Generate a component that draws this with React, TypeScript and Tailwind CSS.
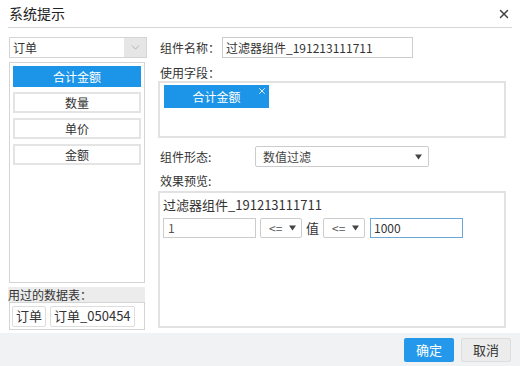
import { X, ChevronDown } from 'lucide-react'

const fields = ['合计金额', '数量', '单价', '金额']

function Caret() {
  return (
    <svg width="7" height="6" viewBox="0 0 7 6" className="shrink-0">
      <path d="M0 0.5h7L3.5 5.5z" fill="#444" />
    </svg>
  )
}

export default function App() {
  return (
    <div
      className="w-[520px] h-[366px] bg-white flex flex-col text-[12px] text-[#333] overflow-hidden"
      style={{ fontFamily: '"Noto Sans CJK SC", "Noto Sans", sans-serif' }}
    >
      {/* Header */}
      <div className="mx-2 h-[28px] flex items-center justify-between border-b border-[#d6d6d6] shrink-0">
        <span className="text-[14px] text-[#222] pl-[1px] -mt-[1px]">系统提示</span>
        <X className="w-[14px] h-[14px] text-[#444] mr-[1px]" strokeWidth={2.5} />
      </div>

      {/* Body */}
      <div className="flex flex-1 pt-[9px] pl-[9px] min-h-0">
        {/* Left column */}
        <div className="w-[136px] flex flex-col shrink-0">
          <div className="h-[21px] flex border border-[#d4d4d4] mr-[-2px]">
            <div className="flex-1 flex items-center pl-[3px]">订单</div>
            <div className="w-[22px] bg-[#e6e6e6] flex items-center justify-center">
              <ChevronDown className="w-[13px] h-[13px] text-[#999]" strokeWidth={1.25} />
            </div>
          </div>
          <div className="mt-[4px] h-[221px] border border-[#d4d4d4] px-[3px] pt-[3px] flex flex-col gap-[5px]">
            {fields.map((f, i) => (
              <div
                key={f}
                className={
                  i === 0
                    ? 'h-[21px] flex items-center justify-center bg-[#1c95e8] text-white'
                    : 'h-[21px] flex items-center justify-center border-2 border-[#e4e4e4] text-[#333]'
                }
              >
                {f}
              </div>
            ))}
          </div>
          <div className="mt-[4px] h-[15px] bg-[#ececec] flex items-center -ml-[1px] leading-none">用过的数据表：</div>
          <div className="h-[28px] border border-[#d4d4d4] flex items-center gap-[4px] pl-[2px]">
            <span className="h-[21px] px-[3px] flex items-center border border-[#ddd] rounded-[2px] text-[13px]">订单</span>
            <span className="h-[21px] px-[3px] flex items-center border border-[#ddd] rounded-[2px] text-[13px]">订单_050454</span>
          </div>
        </div>

        {/* Right column */}
        <div className="ml-[13px] w-[348px] flex flex-col">
          <div className="flex items-center h-[21px]">
            <span className="w-[64px] pl-[2px]">组件名称：</span>
            <div className="w-[191px] h-[21px] border border-[#ccc] flex items-center pl-[3px]">
              过滤器组件_191213111711
            </div>
          </div>
          <div className="mt-[6px] pl-[2px] h-[17px] flex items-center">使用字段：</div>
          <div className="h-[57px] border-2 border-[#e2e2e2] pl-[4px] pt-[2px]">
            <div className="relative w-[105px] h-[23px] bg-[#1c95e8] text-white flex items-center justify-center">
              合计金额
              <X className="absolute right-[2px] top-[1px] w-[10px] h-[10px]" strokeWidth={2} />
            </div>
          </div>
          <div className="mt-[8px] flex items-center h-[21px]">
            <span className="w-[97px] pl-[2px]">组件形态:</span>
            <div className="w-[174px] h-[21px] border border-[#ccc] rounded-[2px] flex items-center justify-between pl-[7px] pr-[6px]">
              <span className="text-[#444]">数值过滤</span>
              <Caret />
            </div>
          </div>
          <div className="mt-[4px] pl-[2px] h-[20px] flex items-center">效果预览:</div>
          <div className="h-[137px] border-2 border-[#e2e2e2] px-[3px] pt-[2px]">
            <div className="h-[20px] flex items-center text-[13px]">过滤器组件_191213111711</div>
            <div className="mt-[3px] flex items-center h-[20px]">
              <div className="w-[93px] h-[20px] border border-[#ccc] flex items-center pl-[4px] text-[#555]">1</div>
              <div className="ml-[4px] w-[42px] h-[20px] border border-[#ccc] rounded-[2px] flex items-center justify-between pl-[8px] pr-[5px] text-[#555]">
                <span>&lt;=</span>
                <Caret />
              </div>
              <span className="mx-[4px] text-[13px]">值</span>
              <div className="w-[42px] h-[20px] border border-[#ccc] rounded-[2px] flex items-center justify-between pl-[8px] pr-[5px] text-[#555]">
                <span>&lt;=</span>
                <Caret />
              </div>
              <div className="ml-[5px] w-[93px] h-[20px] border border-[#6aa8d8] flex items-center pl-[3px]">1000</div>
            </div>
          </div>
        </div>
      </div>

      {/* Footer */}
      <div className="h-[33px] bg-[#f0f2f4] flex items-center justify-end gap-[7px] pr-[9px] shrink-0">
        <button className="w-[50px] h-[24px] bg-[#2499ec] text-white text-[13px] rounded-[2px]">确定</button>
        <button className="w-[50px] h-[24px] bg-[#ececec] border border-[#ddd] text-[#333] text-[13px] rounded-[2px]">取消</button>
      </div>
    </div>
  )
}
